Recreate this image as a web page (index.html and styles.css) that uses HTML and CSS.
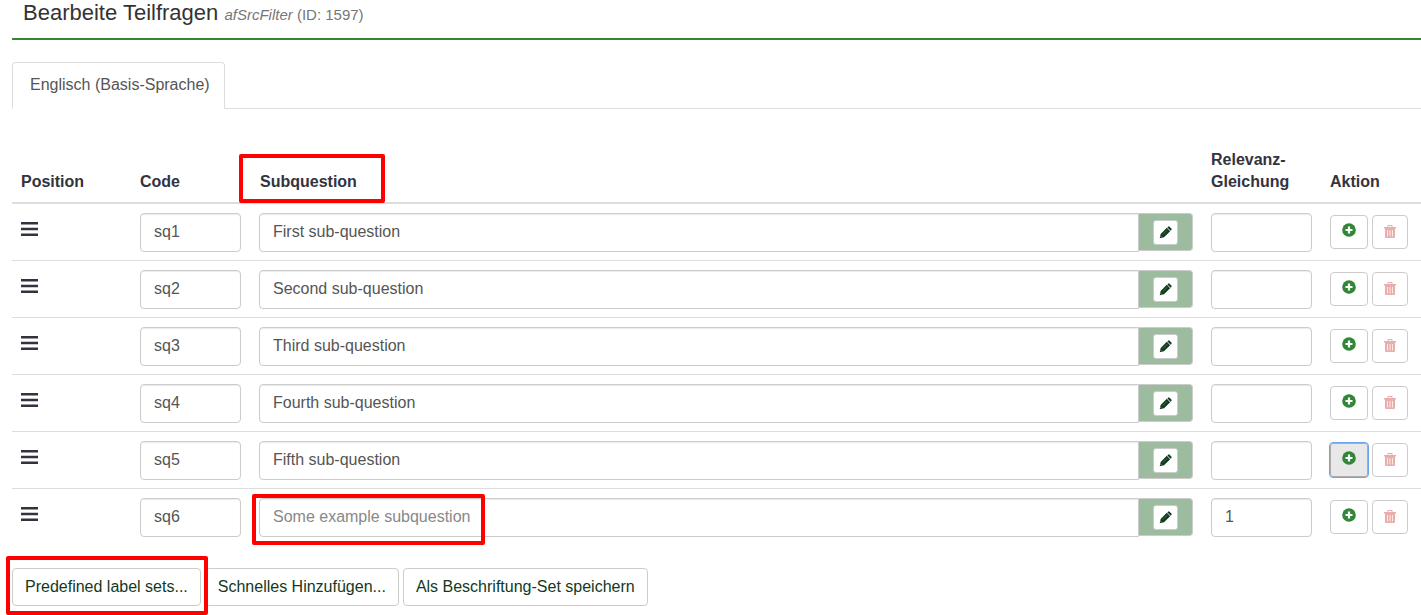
FILE: index.html
```html
<!DOCTYPE html>
<html lang="de">
<head>
<meta charset="utf-8">
<title>Bearbeite Teilfragen</title>
<link rel="stylesheet" href="styles.css">
</head>
<body>
<svg class="sprite" aria-hidden="true">
  <symbol id="bars" viewBox="0 0 17 16"><path d="M0 1h17v2.4H0zM0 6.8h17v2.4H0zM0 12.6h17V15H0z"/></symbol>
  <symbol id="pencil" viewBox="0 0 14 14"><path d="M.8 13.200l1-4.600 6.600-6.600 3.600 3.600-6.600 6.600z"/><path d="M9 1.500l.8-.8q.8-.7 1.600 0l1.900 1.900q.7.800 0 1.600l-.8.8z"/><path d="M4 9.300l4.800-4.800" stroke="#6f9a7f" stroke-width=".6"/><path d="M2 11.200l.9.900" stroke="#fff" stroke-width=".7"/></symbol>
  <symbol id="plus" viewBox="0 0 14 14"><circle cx="7" cy="7" r="6.800"/><path d="M7 3.500v7M3.500 7h7" stroke="#fff" stroke-width="2.200"/></symbol>
  <symbol id="trash" viewBox="0 0 12 13"><path d="M0 2h3.500V.8q0-.8.8-.8h3.400q.8 0 .8.8V2H12v1.500H0zM4.500 1v1h3V1z" fill-rule="evenodd"/><path d="M1 3h10v9q0 1-1 1H2q-1 0-1-1z"/><path d="M3.500 5v6.500M6 5v6.500M8.500 5v6.500" stroke="#f7eddc" stroke-width="1"/></symbol>
</svg>
<main class="page">
  <h1 class="page-title">Bearbeite Teilfragen <small><em>afSrcFilter</em> (ID: 1597)</small></h1>
  <nav class="tabs"><a class="tab" href="#basis">Englisch (Basis-Sprache)</a></nav>
  <table class="questions" id="basis">
    <colgroup><col class="col-side"><col class="col-side"><col><col class="col-side"><col class="col-action"></colgroup>
    <thead>
      <tr><th>Position</th><th>Code</th><th><span class="marked">Subquestion<span class="mark mark-head"></span></span></th><th>Relevanz-Gleichung</th><th>Aktion</th></tr>
    </thead>
    <tbody>
      <tr>
        <td><svg class="handle"><use href="#bars"/></svg></td>
        <td><input class="field" aria-label="Code 1" value="sq1"></td>
        <td><div class="group"><input class="field" aria-label="Subquestion 1" value="First sub-question"><span class="addon"><button class="edit" aria-label="Bearbeiten"><svg><use href="#pencil"/></svg></button></span></div></td>
        <td><input class="field" aria-label="Relevanz 1"></td>
        <td><div class="actions"><button class="act add" aria-label="Hinzufügen"><svg><use href="#plus"/></svg></button><button class="act del" aria-label="Löschen"><svg><use href="#trash"/></svg></button></div></td>
      </tr>
      <tr>
        <td><svg class="handle"><use href="#bars"/></svg></td>
        <td><input class="field" aria-label="Code 2" value="sq2"></td>
        <td><div class="group"><input class="field" aria-label="Subquestion 2" value="Second sub-question"><span class="addon"><button class="edit" aria-label="Bearbeiten"><svg><use href="#pencil"/></svg></button></span></div></td>
        <td><input class="field" aria-label="Relevanz 2"></td>
        <td><div class="actions"><button class="act add" aria-label="Hinzufügen"><svg><use href="#plus"/></svg></button><button class="act del" aria-label="Löschen"><svg><use href="#trash"/></svg></button></div></td>
      </tr>
      <tr>
        <td><svg class="handle"><use href="#bars"/></svg></td>
        <td><input class="field" aria-label="Code 3" value="sq3"></td>
        <td><div class="group"><input class="field" aria-label="Subquestion 3" value="Third sub-question"><span class="addon"><button class="edit" aria-label="Bearbeiten"><svg><use href="#pencil"/></svg></button></span></div></td>
        <td><input class="field" aria-label="Relevanz 3"></td>
        <td><div class="actions"><button class="act add" aria-label="Hinzufügen"><svg><use href="#plus"/></svg></button><button class="act del" aria-label="Löschen"><svg><use href="#trash"/></svg></button></div></td>
      </tr>
      <tr>
        <td><svg class="handle"><use href="#bars"/></svg></td>
        <td><input class="field" aria-label="Code 4" value="sq4"></td>
        <td><div class="group"><input class="field" aria-label="Subquestion 4" value="Fourth sub-question"><span class="addon"><button class="edit" aria-label="Bearbeiten"><svg><use href="#pencil"/></svg></button></span></div></td>
        <td><input class="field" aria-label="Relevanz 4"></td>
        <td><div class="actions"><button class="act add" aria-label="Hinzufügen"><svg><use href="#plus"/></svg></button><button class="act del" aria-label="Löschen"><svg><use href="#trash"/></svg></button></div></td>
      </tr>
      <tr>
        <td><svg class="handle"><use href="#bars"/></svg></td>
        <td><input class="field" aria-label="Code 5" value="sq5"></td>
        <td><div class="group"><input class="field" aria-label="Subquestion 5" value="Fifth sub-question"><span class="addon"><button class="edit" aria-label="Bearbeiten"><svg><use href="#pencil"/></svg></button></span></div></td>
        <td><input class="field" aria-label="Relevanz 5"></td>
        <td><div class="actions"><button class="act add active" aria-label="Hinzufügen"><svg><use href="#plus"/></svg></button><button class="act del" aria-label="Löschen"><svg><use href="#trash"/></svg></button></div></td>
      </tr>
      <tr>
        <td><svg class="handle"><use href="#bars"/></svg></td>
        <td><input class="field" aria-label="Code 6" value="sq6"></td>
        <td><div class="group"><input class="field" aria-label="Subquestion 6" placeholder="Some example subquestion"><span class="addon"><button class="edit" aria-label="Bearbeiten"><svg><use href="#pencil"/></svg></button></span><span class="mark mark-field"></span></div></td>
        <td><input class="field" aria-label="Relevanz 6" value="1"></td>
        <td><div class="actions"><button class="act add" aria-label="Hinzufügen"><svg><use href="#plus"/></svg></button><button class="act del" aria-label="Löschen"><svg><use href="#trash"/></svg></button></div></td>
      </tr>
    </tbody>
  </table>
  <div class="footer">
    <span class="marked"><button class="btn">Predefined label sets...</button><span class="mark mark-button"></span></span>
    <button class="btn">Schnelles Hinzufügen...</button>
    <button class="btn">Als Beschriftung-Set speichern</button>
  </div>
</main>
</body>
</html>
```
FILE: styles.css
```css
* { box-sizing: border-box; }
body {
  margin: 0;
  background: #fff;
  color: #333340;
  font: 16px/22px "Liberation Sans", Arial, sans-serif;
  overflow-x: hidden;
}
input, button { font: inherit; }
svg { display: block; fill: currentColor; }
.sprite { position: absolute; width: 0; height: 0; }
.page { padding-left: 12px; }

.page-title {
  margin: 0;
  padding: 0 11px 12px;
  border-bottom: 2px solid #328637;
  font-size: 22px;
  font-weight: 400;
  line-height: 26px;
  color: #333;
}
.page-title small { font-size: 15px; line-height: 16px; color: #777; }

.tabs { display: flex; margin-top: 22px; border-bottom: 1px solid #ddd; }
.tab {
  margin-bottom: -1px;
  padding: 11px 14px 12px 17px;
  border: 1px solid #ddd;
  border-bottom-color: #fff;
  border-radius: 4px 4px 0 0;
  background: #fff;
  color: #555;
  text-decoration: none;
}

.questions {
  width: 100%;
  margin-top: 31px;
  table-layout: fixed;
  border-collapse: separate;
  border-spacing: 0;
}
.col-side { width: 119px; }
.col-action { width: 100px; }
.questions th {
  padding: 9px;
  border-bottom: 2px solid #ddd;
  text-align: left;
  vertical-align: bottom;
}
.questions th:nth-child(3) { padding-left: 10px; }
.questions td {
  padding: 9px 9px 8px;
  border-bottom: 1px solid #ddd;
  vertical-align: top;
}
.questions tr:last-child td { border-bottom: 0; }
.questions td:last-child { padding-right: 0; }
.handle { width: 17px; height: 16px; margin-top: 8px; }

.field {
  display: block;
  width: 100%;
  height: 39px;
  padding: 6px 13px 8px;
  border: 1px solid #ccc;
  border-radius: 4px;
  background: #fff;
  box-shadow: inset 0 1px 1px rgba(0, 0, 0, .08);
  color: #555;
}
.field::placeholder { color: #888; opacity: 1; }
.group { position: relative; display: flex; align-items: flex-start; }
.group .field { flex: 1; min-width: 0; border-radius: 4px 0 0 4px; }
.addon {
  display: flex;
  align-items: center;
  justify-content: center;
  width: 54px;
  height: 38px;
  border: 1px solid #ccc;
  border-left: 0;
  border-radius: 0 4px 4px 0;
  background: #9cbb9f;
}
.edit {
  display: grid;
  place-items: center;
  width: 25px;
  height: 25px;
  padding: 0;
  border: 1px solid #ccc;
  border-radius: 3px;
  background: #fff;
  color: #113a1e;
}
.edit svg { width: 13px; height: 13px; }

.actions { display: flex; gap: 4px; padding-top: 2px; }
.act {
  display: flex;
  justify-content: center;
  height: 34px;
  padding: 7px 0 0;
  border: 1px solid #ccc;
  border-radius: 4px;
  background: #fff;
}
.add { width: 38px; color: #328637; }
.add svg { width: 14px; height: 14px; }
.del { width: 36px; padding-top: 9px; color: #e9adae; }
.del svg { width: 12px; height: 13px; }
.active {
  border-color: #adadad;
  border-radius: 3px;
  background: #e8e8e8;
  outline: 1px solid #6da2ee;
  outline-offset: 0;
}

.footer { display: flex; gap: 4px; padding: 23px 0 9px; }
.btn {
  height: 38px;
  padding: 0 12px;
  border: 1px solid #ccc;
  border-radius: 4px;
  background: #fff;
  color: #113a1e;
  white-space: nowrap;
}

.marked { position: relative; display: inline-block; }
.mark {
  position: absolute;
  border: 4px solid #f00;
  border-radius: 2px;
  pointer-events: none;
}
.mark-head { inset: -17px -28px -10px -21px; }
.mark-field { left: -7px; top: -4px; width: 233px; height: 51px; }
.mark-button { inset: -12px -7px -9px -6px; }
```
